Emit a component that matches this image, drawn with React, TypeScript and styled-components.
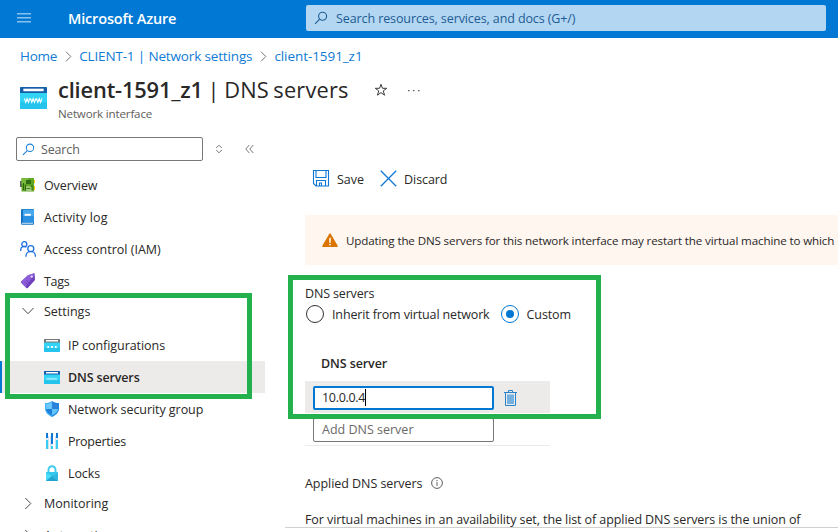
import React from 'react';
import styled, { createGlobalStyle } from 'styled-components';

const GlobalStyle = createGlobalStyle`
  * { box-sizing: border-box; }
  body {
    margin: 0;
    background: #fff;
    color: #292827;
    font-family: "Open Sans", "Noto Sans", sans-serif;
    font-size: 12.5px;
    overflow: hidden;
  }
  svg { display: block; flex: none; }
`;

const Page = styled.div`
  position: relative;
  width: 838px;
  height: 532px;
  overflow: hidden;
  display: flex;
  flex-direction: column;
`;

const Label = styled.span<{ $track?: number; $bold?: boolean }>`
  white-space: pre;
  letter-spacing: ${p => p.$track ?? 0}px;
  font-weight: ${p => (p.$bold ? 600 : 400)};
`;

/* ---------- header ---------- */

const TopBar = styled.header`
  flex: none;
  height: 38px;
  background: #0078d4;
  display: flex;
  align-items: center;
  padding: 0 12px 2px 17px;
`;

const Brand = styled.div`
  width: 238px;
  margin: 0 17px 0 20px;
  padding-left: 17px;
  color: #fff;
  font-size: 14.5px;
  font-weight: 600;
  letter-spacing: -0.16px;
  white-space: nowrap;
`;

const GlobalSearch = styled.div`
  flex: 1;
  height: 26px;
  border-radius: 2px;
  background: #b3d6f2;
  color: #1d5c94;
  display: flex;
  align-items: center;
  gap: 8px;
  padding-left: 8px;
`;

const Breadcrumb = styled.nav`
  flex: none;
  height: 37px;
  display: flex;
  align-items: center;
  padding: 0 0 2px 20px;
  color: #0f7bd4;
  font-size: 13.5px;
  > svg { margin: 2px 7px 0 8px; }
`;

const TitleBlock = styled.div`
  flex: none;
  height: 54px;
  display: flex;
  padding-left: 20px;
  > svg { margin: 12px 11px 0 0; }
`;

const TitleText = styled.div`
  display: flex;
  flex-direction: column;
`;

const TitleLine = styled.h1`
  margin: 0;
  height: 30px;
  line-height: 30px;
  display: flex;
  align-items: center;
  font-size: 21.8px;
`;

const BladeName = styled(Label)`
  word-spacing: -1.3px;
`;

const SubTitle = styled.div`
  height: 18px;
  line-height: 18px;
  color: #605e5c;
  font-size: 11.6px;
`;

const TitleActions = styled.div`
  display: flex;
  align-items: center;
  gap: 20px;
  margin-left: 25px;
`;

/* ---------- body ---------- */

const Body = styled.div`
  flex: 1;
  min-height: 0;
  display: flex;
`;

const Sidebar = styled.aside`
  width: 265px;
  flex: none;
  padding-top: 8px;
`;

const SearchRow = styled.div`
  height: 32px;
  display: flex;
  align-items: flex-start;
  padding-left: 16px;
  > svg { margin-top: 7px; }
  > svg + svg { margin-left: 22px; }
`;

const MenuSearch = styled.div`
  flex: none;
  width: 187px;
  height: 24px;
  margin-right: 12px;
  border: 1px solid #7a7876;
  border-radius: 2px;
  display: flex;
  align-items: center;
  gap: 6px;
  padding-left: 5px;
  color: #605e5c;
`;

const MenuItem = styled.div<{ $nested?: boolean; $active?: boolean }>`
  height: 32px;
  display: flex;
  align-items: center;
  gap: 8px;
  padding-left: ${p => (p.$nested ? 42 : 18)}px;
  border-left: 2px solid ${p => (p.$active ? '#0078d4' : 'transparent')};
  background: ${p => (p.$active ? '#edebe9' : 'transparent')};
`;

const MenuGroup = styled.div`
  height: 28px;
  margin-bottom: 4px;
  display: flex;
  align-items: center;
  gap: 8px;
  padding-left: 20px;
`;

const Content = styled.main`
  flex: 1;
  min-width: 0;
  padding: 34px 0 0 40px;
  overflow: hidden;
`;

const Toolbar = styled.div`
  height: 32px;
  display: flex;
  align-items: center;
  padding-left: 7px;
`;

const Command = styled.div`
  display: flex;
  align-items: center;
  gap: 7px;
  margin-right: 16px;
  > svg { margin-top: -2px; }
`;

const Banner = styled.div`
  height: 50px;
  margin-top: 20px;
  background: #fff6f0;
  border-radius: 2px 0 0 2px;
  display: flex;
  align-items: center;
  gap: 8px;
  padding-left: 17px;
  font-size: 11.6px;
`;

const FieldLabel = styled.div`
  margin-top: 20px;
  height: 17px;
  line-height: 18px;
`;

const RadioGroup = styled.div`
  height: 24px;
  display: flex;
  align-items: center;
  padding-left: 1px;
`;

const Option = styled.label`
  display: flex;
  align-items: center;
  gap: 8px;
  margin-right: 11px;
`;

const Radio = styled.span<{ $checked?: boolean }>`
  width: 18px;
  height: 18px;
  border-radius: 50%;
  border: 1px solid ${p => (p.$checked ? '#0078d4' : '#323130')};
  display: flex;
  align-items: center;
  justify-content: center;
  &::after {
    content: '';
    width: 8px;
    height: 8px;
    border-radius: 50%;
    background: ${p => (p.$checked ? '#0078d4' : 'transparent')};
  }
`;

const Grid = styled.div`
  width: 245px;
  margin-top: 20px;
  border-bottom: 1px solid #edebe9;
`;

const GridHead = styled.div`
  height: 35px;
  line-height: 36px;
  padding-left: 16px;
`;

const GridRow = styled.div<{ $selected?: boolean }>`
  height: 32px;
  display: flex;
  align-items: center;
  gap: 10px;
  padding: 1px 0 0 8px;
  background: ${p => (p.$selected ? '#edebe9' : 'transparent')};
`;

const TextBox = styled.div<{ $focused?: boolean }>`
  width: 181px;
  height: 24px;
  border: ${p => (p.$focused ? '2px solid #0078d4' : '1px solid #7a7876')};
  border-radius: 2px;
  background: #fff;
  padding-left: ${p => (p.$focused ? 7 : 8)}px;
  display: flex;
  align-items: center;
  color: ${p => (p.$focused ? '#292827' : '#6b6967')};
`;

const Caret = styled.span`
  width: 1px;
  height: 17px;
  background: #000;
`;

const Section = styled.div`
  margin-top: 27px;
  height: 20px;
  display: flex;
  align-items: center;
  gap: 9px;
`;

const Paragraph = styled.p`
  margin: 16px 0 0;
  height: 18px;
  line-height: 21px;
`;

const Divider = styled.div`
  height: 1px;
  margin-left: -20px;
  background: #d2d0ce;
`;

const Highlight = styled.div<{ $x: number; $y: number; $w: number; $h: number }>`
  position: absolute;
  left: ${p => p.$x}px;
  top: ${p => p.$y}px;
  width: ${p => p.$w}px;
  height: ${p => p.$h}px;
  border: 5px solid #22b14c;
  pointer-events: none;
`;

/* ---------- icons ---------- */

const SearchIcon = ({ color, size = 14 }: { color: string; size?: number }) => (
  <svg width={size} height={size} viewBox="0 0 14 14" fill="none" stroke={color} strokeWidth="1.1">
    <circle cx="8.6" cy="5.2" r="4" />
    <path d="M5.7 8.1 1 12.8" />
  </svg>
);

const Chevron = () => (
  <svg width="7" height="11" viewBox="0 0 7 11" fill="none" stroke="#797775" strokeWidth="1">
    <path d="M1 .7 5.8 5.5 1 10.3" />
  </svg>
);

const BrowserIcon = ({ bar, children, w = 16, h = 13 }: { bar: string; children: React.ReactNode; w?: number; h?: number }) => (
  <svg width={w} height={h} viewBox="0 0 16 13" preserveAspectRatio="none">
    <rect y="0" width="16" height="13" rx=".6" fill="#32d4f5" />
    <path d="M0 9h16v3.4a.6.6 0 0 1-.6.6H.6a.6.6 0 0 1-.6-.6z" fill="#26c4ec" />
    <path d="M.6 0h14.8a.6.6 0 0 1 .6.6V3.5H0V.6A.6.6 0 0 1 .6 0z" fill={bar} />
    <rect x="2" y="1" width="12" height="1.5" fill="#fff" />
    {children}
  </svg>
);

const Www = ({ color = '#fff' }: { color?: string }) => (
  <path
    d="m1.700 6.700.8 2.400.8-2.200.8 2.200.8-2.400m.4 0 .8 2.400.8-2.200.8 2.200.8-2.400m.4 0 .8 2.400.8-2.200.8 2.200.8-2.400"
    transform="translate(.9 0)"
    fill="none" stroke={color} strokeWidth=".65"
  />
);

const NicIcon = () => (
  <svg width="16" height="16" viewBox="0 0 16 16">
    <rect x="0" y="4" width="2" height="6" fill="#5b5b5b" />
    <path d="M13 3h2v3h-2zM13 9h2v4h-2z" fill="#ffca00" />
    <rect x="1.5" y="1" width="12.5" height="13.5" rx=".6" fill="#5ea624" />
    <path d="M1.5 1H8v6H1.5z" fill="#78b83c" />
    <path d="M6 3h5v4H6z" fill="#2f6b12" />
    <path d="M3.5 6v7M5.5 8v5.5M12 8v5" stroke="#2c6410" strokeWidth="1" />
    <path d="M7 9v5M9 9v5M10.8 10v4" stroke="#e1eed5" strokeWidth=".9" />
    <path d="M6.5 11.5h4" stroke="#35731a" strokeWidth=".8" />
  </svg>
);

const LogIcon = () => (
  <svg width="16" height="16" viewBox="0 0 16 16">
    <path d="M2.200 0H13a1 1 0 0 1 1 1v13.800a1 1 0 0 1-1 1H2.200A1.200 1.200 0 0 1 1 14.600V1.200A1.200 1.200 0 0 1 2.200 0z" fill="#1272c4" />
    <path d="M3 .6h11v12.600H3z" fill="#48a8ee" />
    <path d="M3 7h11v6.500H3z" fill="#2b91e0" />
    <path d="M1.800 13.800H13v1H2.500a.7.7 0 0 1-.7-1z" fill="#d4eafa" />
    <rect x="4.600" y="4.800" width="6.200" height="2" fill="#fff" />
  </svg>
);

const PeopleIcon = () => (
  <svg width="16" height="16" viewBox="0 0 16 16" fill="none" stroke="#1d6fe0" strokeWidth="1.3">
    <circle cx="4.300" cy="3.200" r="2.500" />
    <path d="M.7 10V8.700A3.300 3.300 0 0 1 6.300 6.300" />
    <circle cx="10.800" cy="7.700" r="3" />
    <path d="M6 15.800v-.7a4.700 4.700 0 0 1 9.400 0v.7" />
  </svg>
);

const TagIcon = () => (
  <svg width="16" height="16" viewBox="0 0 16 16">
    <path d="M8 2.300 13.500.4a.9.900 0 0 1 1.100.7l.4 5.400a1.500 1.500 0 0 1-.4 1L7.800 14.900a1 1 0 0 1-1.500 0L1.200 9.800a1 1 0 0 1 0-1.400z" fill="#7040bd" />
    <path d="M8 2.300 13.500.4a.9.900 0 0 1 1.100.7L5.500 13.900 1.200 9.800a1 1 0 0 1 0-1.400z" fill="#8d5cd9" />
    <circle cx="11.800" cy="3.600" r="1.200" fill="#e7dcf8" />
    <path d="m4.800 9.300 2.800 2.800M6.500 7.500l2.800 2.800" stroke="#6833b3" strokeWidth=".7" />
  </svg>
);

const ShieldIcon = () => (
  <svg width="16" height="16" viewBox="0 0 16 16">
    <path d="M8 0C10 1.500 12 2 15 2v5.500C15 12 11 14.500 8 16z" fill="#1a83dd" />
    <path d="M8 0C6 1.500 4 2 1 2v5.500C1 12 5 14.500 8 16z" fill="#43b4f5" />
    <path d="M8 1.300C9.500 2.400 11.500 3 13.900 3.100V8H8z" fill="#2c83dc" />
    <path d="M8 1.300C6.500 2.400 4.500 3 2.100 3.100V8H8z" fill="#6bc8fb" />
    <path d="M2.100 8H8v6.600C5.500 13.200 2.300 11.300 2.100 8z" fill="#1f80dc" />
    <path d="M13.900 8H8v6.600c2.500-1.400 5.700-3.300 5.900-6.600z" fill="#61c5fb" />
  </svg>
);

const PropertiesIcon = () => (
  <svg width="16" height="16" viewBox="0 0 16 16">
    <path d="M2 0h2v5H2zM7 0h2v11H7zM12 0h2v5h-2z" fill="#0f78d4" />
    <path d="M2 7h2v9H2zM7 13h2v3H7zM12 7h2v9h-2z" fill="#39cdf1" />
    <path d="M2 5h2v2H2zM7 11h2v2H7zM12 5h2v2h-2z" fill="#d9ecf8" />
    <path d="M4 3h1v13H4zM11 3h1v13h-1zM6 3h1v13H6z" fill="#cfe1f0" />
  </svg>
);

const LockIcon = () => (
  <svg width="16" height="16" viewBox="0 0 16 16">
    <path d="M4.500 7.500V4.700a3.500 3.500 0 0 1 7 0v2.800" fill="none" stroke="#3ccdef" strokeWidth="1.900" />
    <rect x="2" y="7" width="12" height="9" rx=".6" fill="#32c8ed" />
    <path d="M2 8v7.400L8 11z" fill="#4cdcf7" />
    <path d="m14 8-6 3 6 4.400z" fill="#2fb7df" />
    <path d="m2.300 16 5.700-5 5.700 5z" fill="#1fa5d0" />
  </svg>
);

const SaveIcon = () => (
  <svg width="18" height="17" viewBox="0 0 18 17" fill="none" stroke="#0f78d4" strokeWidth="1.1">
    <path d="M1.500.5h15v15.500H4L1.500 13.500z" />
    <path d="M4 .5v7h10v-7M4.500 16v-5.500h9V16M7.500 16v-3h2v3" />
  </svg>
);

const CloseIcon = () => (
  <svg width="17" height="17" viewBox="0 0 17 17" fill="none" stroke="#0f78d4" strokeWidth="1.300">
    <path d="m.8.8 15.400 15.400M16.200.8.8 16.200" />
  </svg>
);

const WarningIcon = () => (
  <svg width="16" height="15" viewBox="0 0 16 15">
    <path d="M8 1.200 15 13.200H1z" fill="#db7500" stroke="#db7500" strokeWidth="1.600" strokeLinejoin="round" />
    <path d="M8 4.700v5" stroke="#fff" strokeWidth="1.500" />
    <circle cx="8" cy="11.600" r=".9" fill="#fff" />
  </svg>
);

const TrashIcon = () => (
  <svg width="13" height="16" viewBox="0 0 13 16" fill="none" stroke="#2a82cb" strokeWidth="1">
    <path d="M0 2.500h13M4.500 2.300V.5h4v1.800M1.500 2.500v13h10v-13" />
    <rect x="3" y="4.500" width="7" height="9.500" fill="#74b0e0" stroke="none" />
  </svg>
);

const topItems = [
  { icon: <NicIcon />, text: 'Overview', track: -0.1 },
  { icon: <LogIcon />, text: 'Activity log', track: 0.1 },
  { icon: <PeopleIcon />, text: 'Access control (IAM)', track: 0 },
  { icon: <TagIcon />, text: 'Tags', track: -0.3 },
];

const settingsItems = [
  {
    icon: (
      <BrowserIcon bar="#767676">
        <path d="M3.200 7h2v2h-2zM7 7h2v2H7zM10.800 7h2v2h-2z" fill="#e9fbff" />
      </BrowserIcon>
    ),
    text: 'IP configurations',
    track: -0.06,
  },
  { icon: <BrowserIcon bar="#155ea8"><Www color="#b9f1fc" /></BrowserIcon>, text: 'DNS servers', track: -0.14, active: true },
  { icon: <ShieldIcon />, text: 'Network security group', track: -0.06 },
  { icon: <PropertiesIcon />, text: 'Properties', track: -0.26 },
  { icon: <LockIcon />, text: 'Locks', track: -0.1 },
];

export default function App() {
  return (
    <Page>
      <GlobalStyle />
      <TopBar>
        <svg width="14" height="10" viewBox="0 0 14 10">
          <path d="M0 0h14v1.500H0zM0 4h14v1.500H0zM0 8h14v1.500H0z" fill="#8ac2ec" />
        </svg>
        <Brand>Microsoft Azure</Brand>
        <GlobalSearch>
          <SearchIcon color="#1d5c94" />
          <Label $track={-0.1}>Search resources, services, and docs (G+/)</Label>
        </GlobalSearch>
      </TopBar>

      <Breadcrumb>
        <Label $track={-0.25}>Home</Label>
        <Chevron />
        <Label $track={-0.15}>CLIENT-1 | Network settings</Label>
        <Chevron />
        <Label $track={-0.07}>client-1591_z1</Label>
      </Breadcrumb>

      <TitleBlock>
        <BrowserIcon bar="#155ea8" w={27} h={22}><Www /></BrowserIcon>
        <TitleText>
          <TitleLine>
            <Label $bold $track={-0.15}>client-1591_z1</Label>
            <BladeName $track={0.17}> | DNS servers</BladeName>
            <TitleActions>
              <svg width="14" height="14" viewBox="0 0 14 14" fill="none" stroke="#3b3a39" strokeWidth="1">
                <path d="m7 1.300 1.450 4h4.250L9.300 7.900l1.250 4.300L7 9.600l-3.550 2.600L4.700 7.900 1.300 5.300h4.250z" />
              </svg>
              <svg width="12" height="3" viewBox="0 0 12 3" fill="#605e5c">
                <path d="M0 1h1.500v1.300H0zM5 1h1.500v1.300H5zM10 1h1.500v1.300H10z" />
              </svg>
            </TitleActions>
          </TitleLine>
          <SubTitle><Label $track={-0.17}>Network interface</Label></SubTitle>
        </TitleText>
      </TitleBlock>

      <Body>
        <Sidebar>
          <SearchRow>
            <MenuSearch>
              <SearchIcon color="#1a7fd6" size={13} />
              <Label $track={-0.15}>Search</Label>
            </MenuSearch>
            <svg width="8" height="10" viewBox="0 0 8 10" fill="none" stroke="#797775">
              <path d="M1.200 4 4 1.200 6.800 4M1.200 6 4 8.800 6.800 6" />
            </svg>
            <svg width="9" height="10" viewBox="0 0 9 10" fill="none" stroke="#797775">
              <path d="M4.300 1 .8 5l3.500 4M8.300 1 4.800 5l3.500 4" />
            </svg>
          </SearchRow>
          {topItems.map(i => (
            <MenuItem key={i.text}>
              {i.icon}
              <Label $track={i.track}>{i.text}</Label>
            </MenuItem>
          ))}
          <MenuGroup>
            <svg width="16" height="8" viewBox="0 0 16 8" fill="none" stroke="#484644">
              <path d="m2.500 1 5.500 5.700L13.500 1" />
            </svg>
            <Label>Settings</Label>
          </MenuGroup>
          {settingsItems.map(i => (
            <MenuItem key={i.text} $nested $active={i.active}>
              {i.icon}
              <Label $track={i.track} $bold={i.active}>{i.text}</Label>
            </MenuItem>
          ))}
          {['Monitoring', 'Automation'].map(t => (
            <MenuGroup key={t}>
              <svg width="16" height="13" viewBox="0 0 16 13" fill="none" stroke="#484644">
                <path d="m5.300 1 5.500 5.500L5.300 12" />
              </svg>
              <Label>{t}</Label>
            </MenuGroup>
          ))}
        </Sidebar>

        <Content>
          <Toolbar>
            <Command><SaveIcon /><Label>Save</Label></Command>
            <Command><CloseIcon /><Label $track={-0.08}>Discard</Label></Command>
          </Toolbar>
          <Banner>
            <WarningIcon />
            <Label $track={-0.13}>
              Updating the DNS servers for this network interface may restart the virtual machine to which
            </Label>
          </Banner>
          <FieldLabel><Label $track={-0.15}>DNS servers</Label></FieldLabel>
          <RadioGroup>
            <Option><Radio /><Label $track={-0.14}>Inherit from virtual network</Label></Option>
            <Option><Radio $checked /><Label $track={-0.1}>Custom</Label></Option>
          </RadioGroup>
          <Grid>
            <GridHead><Label $bold $track={-0.1}>DNS server</Label></GridHead>
            <GridRow $selected>
              <TextBox $focused><Label $track={-0.3}>10.0.0.4</Label><Caret /></TextBox>
              <TrashIcon />
            </GridRow>
            <GridRow>
              <TextBox><Label>Add DNS server</Label></TextBox>
            </GridRow>
          </Grid>
          <Section>
            <Label $track={-0.05}>Applied DNS servers</Label>
            <svg width="12" height="12" viewBox="0 0 12 12" fill="none" stroke="#605e5c">
              <circle cx="6" cy="6" r="5.400" />
              <path d="M6 5.200v3.600M6 3v1.200" />
            </svg>
          </Section>
          <Paragraph>
            <Label $track={-0.085}>
              For virtual machines in an availability set, the list of applied DNS servers is the union of
            </Label>
          </Paragraph>
          <Divider />
        </Content>
      </Body>

      <Highlight $x={5} $y={293} $w={247} $h={106} />
      <Highlight $x={288} $y={275} $w={313} $h={144} />
    </Page>
  );
}
